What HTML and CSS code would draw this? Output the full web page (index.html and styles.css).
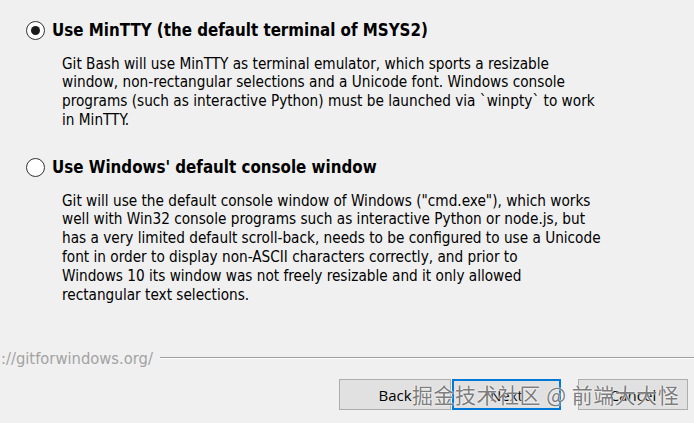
FILE: index.html
```html
<!DOCTYPE html>
<html>
<head>
<meta charset="utf-8">
<link rel="stylesheet" href="styles.css">
</head>
<body>
<div class="page">
  <div class="options">
    <div class="option">
      <div class="option-title">
        <span class="radio checked"><span class="dot"></span></span>
        <span class="label">Use MinTTY (the default terminal of MSYS2)</span>
      </div>
      <p class="desc">Git Bash will use MinTTY as terminal emulator, which sports a resizable<br>window, non-rectangular selections and a Unicode font. Windows console<br>programs (such as interactive Python) must be launched via `winpty` to work<br>in MinTTY.</p>
    </div>
    <div class="option second">
      <div class="option-title">
        <span class="radio"></span>
        <span class="label">Use Windows' default console window</span>
      </div>
      <p class="desc">Git will use the default console window of Windows ("cmd.exe"), which works<br>well with Win32 console programs such as interactive Python or node.js, but<br>has a very limited default scroll-back, needs to be configured to use a Unicode<br>font in order to display non-ASCII characters correctly, and prior to<br>Windows 10 its window was not freely resizable and it only allowed<br>rectangular text selections.</p>
    </div>
  </div>
  <div class="footer-line">
    <span class="url">://gitforwindows.org/</span>
    <span class="rule"></span>
  </div>
  <div class="buttons">
    <div class="btn-pair">
      <button class="btn">Back</button>
      <button class="btn default">Next</button>
    </div>
    <button class="btn cancel">Cancel</button>
    <div class="watermark">掘金技术社区 @ 前端大大怪</div>
  </div>
</div>
</body>
</html>
```

FILE: styles.css
```css
html, body {
  margin: 0;
  padding: 0;
  background: #f0f0f0;
}
body {
  width: 694px;
  height: 423px;
  overflow: hidden;
  font-family: "DejaVu Sans Condensed", "DejaVu Sans", sans-serif;
  color: #000;
}
.page {
  display: flex;
  flex-direction: column;
  height: 423px;
}
.options {
  padding: 21px 0 0 26px;
}
.option-title {
  display: flex;
  align-items: center;
  height: 19px;
  gap: 7px;
}
.radio {
  box-sizing: border-box;
  width: 19px;
  height: 19px;
  border-radius: 50%;
  border: 1.5px solid #333;
  background: #fff;
  display: flex;
  align-items: center;
  justify-content: center;
  flex: none;
}
.radio .dot {
  width: 9px;
  height: 9px;
  border-radius: 50%;
  background: #1a1a1a;
}
.label {
  font-weight: bold;
  font-size: 16.8px;
  line-height: 19px;
  white-space: nowrap;
}
.desc {
  margin: 14.6px 0 0 36px;
  font-size: 15.2px;
  line-height: 18.8px;
  white-space: nowrap;
}
.second {
  margin-top: 28.2px;
}
.footer-line {
  margin-top: 44px;
  display: flex;
  align-items: center;
  gap: 7px;
  height: 20px;
}
.url {
  color: #a3a3a3;
  font-size: 16.4px;
  padding-left: 1px;
  white-space: nowrap;
}
.rule {
  flex: 1;
  height: 1px;
  background: #a0a0a0;
  border-bottom: 1px solid #fff;
}
.buttons {
  position: relative;
  margin-top: 11px;
  display: flex;
  justify-content: flex-end;
  padding-right: 6px;
  gap: 17px;
}
.btn-pair {
  display: flex;
  gap: 1px;
}
.btn {
  box-sizing: border-box;
  width: 112px;
  height: 31px;
  background: #e1e1e1;
  border: 1px solid #adadad;
  font-family: "Open Sans", "DejaVu Sans", sans-serif;
  font-size: 15px;
  color: #000;
  padding: 0;
}
.btn.default {
  border: 2px solid #0078d7;
  width: 109px;
}
.cancel {
  width: 110px;
}
.watermark {
  position: absolute;
  left: 412px;
  top: 0;
  font-family: "Noto Sans CJK SC", sans-serif;
  font-size: 21px;
  line-height: 31px;
  color: rgba(90, 90, 90, 0.8);
  text-shadow: 0 0 1px #fff, 0 0 2px #fff;
  white-space: nowrap;
  letter-spacing: 0.5px;
}
```
